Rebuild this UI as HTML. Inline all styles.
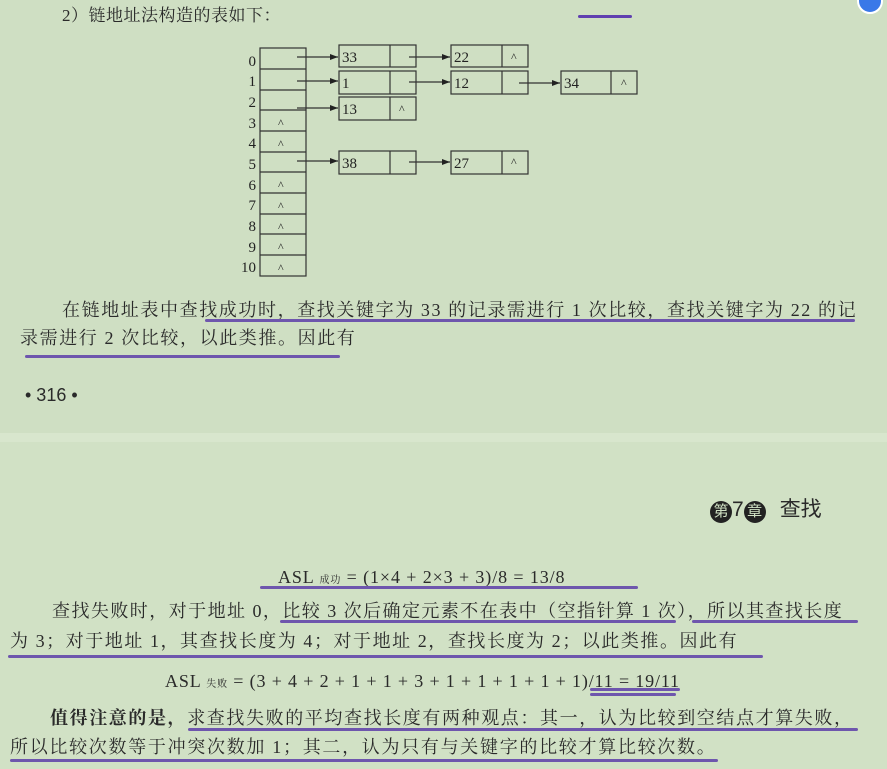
<!DOCTYPE html>
<html><head><meta charset="utf-8"><style>
body{margin:0;width:887px;height:769px;position:relative;overflow:hidden;background:#cfdfc3;font-family:"Liberation Serif","Noto Serif CJK SC",serif;color:#2a2a2a}
.t{position:absolute;white-space:nowrap;font-size:18px;line-height:20px}
.u{position:absolute;height:3px;background:#6e56ad;border-radius:2px}
</style></head><body>
<div style="position:absolute;left:0;top:433px;width:887px;height:9px;background:#d8e6cd"></div>
<div style="position:absolute;left:0;top:442px;width:887px;height:327px;background:#d1e1c5"></div>
<div style="position:absolute;left:857px;top:-12px;width:22px;height:22px;border-radius:50%;background:#3a78e8;border:2px solid #fff"></div>
<div class="t" style="left:62px;top:6px;font-size:17px;letter-spacing:0.5px">2）链地址法构造的表如下：</div>
<div class="u" style="left:578px;top:15px;width:54px;background:#6040b0"></div>
<svg style="position:absolute;left:0;top:0" width="887" height="290" font-family="Liberation Serif" font-size="15" fill="#222">
<defs><marker id="a" markerWidth="8" markerHeight="6" refX="8" refY="3" orient="auto" markerUnits="userSpaceOnUse"><path d="M0,0L8,3L0,6z" fill="#222"/></marker></defs>
<g stroke="#333" stroke-width="1.2" fill="none">
<rect x="260" y="48" width="46" height="228"/>
<path d="M260 69H306M260 90H306M260 110H306M260 131H306M260 152H306M260 172H306M260 193H306M260 214H306M260 234H306M260 255H306"/>
<rect x="339" y="45" width="77" height="22"/><path d="M390 45V67"/>
<rect x="451" y="45" width="77" height="22"/><path d="M502 45V67"/>
<rect x="339" y="71" width="77" height="23"/><path d="M390 71V94"/>
<rect x="451" y="71" width="77" height="23"/><path d="M502 71V94"/>
<rect x="561" y="71" width="76" height="23"/><path d="M611 71V94"/>
<rect x="339" y="97" width="77" height="23"/><path d="M390 97V120"/>
<rect x="339" y="151" width="77" height="23"/><path d="M390 151V174"/>
<rect x="451" y="151" width="77" height="23"/><path d="M502 151V174"/>
<g marker-end="url(#a)">
<path d="M297 57H338"/><path d="M409 57H450"/><path d="M297 81H338"/><path d="M409 82H450"/><path d="M519 83H560"/><path d="M297 108H338"/><path d="M297 161H338"/><path d="M409 162H450"/>
</g>
</g>
<g text-anchor="end"><text x="256" y="66">0</text><text x="256" y="86">1</text><text x="256" y="107">2</text><text x="256" y="128">3</text><text x="256" y="148">4</text><text x="256" y="169">5</text><text x="256" y="190">6</text><text x="256" y="210">7</text><text x="256" y="231">8</text><text x="256" y="252">9</text><text x="256" y="272">10</text></g>
<g font-size="12"><text x="278" y="127">^</text><text x="278" y="148">^</text><text x="278" y="189">^</text><text x="278" y="210">^</text><text x="278" y="231">^</text><text x="278" y="251">^</text><text x="278" y="272">^</text>
<text x="511" y="61">^</text><text x="621" y="87">^</text><text x="399" y="113">^</text><text x="511" y="166">^</text></g>
<text x="342" y="62">33</text><text x="454" y="62">22</text><text x="342" y="88">1</text><text x="454" y="88">12</text><text x="564" y="88">34</text><text x="342" y="114">13</text><text x="342" y="168">38</text><text x="454" y="168">27</text>
</svg>
<div class="t" style="left:62px;top:300px;letter-spacing:1.6px">在链地址表中查找成功时，查找关键字为 33 的记录需进行 1 次比较，查找关键字为 22 的记</div>
<div class="u" style="left:205px;top:319px;width:650px"></div>
<div class="t" style="left:20px;top:328px;letter-spacing:1.6px">录需进行 2 次比较，以此类推。因此有</div>
<div class="u" style="left:25px;top:355px;width:315px"></div>
<div class="t" style="left:25px;top:385px;font-family:'Liberation Sans',sans-serif;font-size:18px">• 316 •</div>
<div class="t" style="left:710px;top:500px;font-family:'Liberation Sans','Noto Sans CJK SC',sans-serif;font-size:21px"><span style="display:inline-block;width:22px;height:22px;border-radius:50%;background:#222;color:#cfe0c3;font-size:15px;text-align:center;line-height:22px">第</span>7<span style="display:inline-block;width:22px;height:22px;border-radius:50%;background:#222;color:#cfe0c3;font-size:15px;text-align:center;line-height:22px">章</span><span style="display:inline-block;width:14px"></span>查找</div>
<div class="t" style="left:278px;top:567px;letter-spacing:0.9px">ASL <span style="font-size:10px">成功</span> = (1×4 + 2×3 + 3)/8 = 13/8</div>
<div class="u" style="left:260px;top:586px;width:378px"></div>
<div class="t" style="left:52px;top:601px;letter-spacing:1.45px">查找失败时，对于地址 0，比较 3 次后确定元素不在表中（空指针算 1 次），所以其查找长度</div>
<div class="u" style="left:280px;top:620px;width:396px"></div>
<div class="u" style="left:692px;top:620px;width:166px"></div>
<div class="t" style="left:10px;top:631px;letter-spacing:1.55px">为 3；对于地址 1，其查找长度为 4；对于地址 2，查找长度为 2；以此类推。因此有</div>
<div class="u" style="left:8px;top:655px;width:755px"></div>
<div class="t" style="left:165px;top:671px;letter-spacing:0.85px">ASL <span style="font-size:10px">失败</span> = (3 + 4 + 2 + 1 + 1 + 3 + 1 + 1 + 1 + 1 + 1)/11 = 19/11</div>
<div class="u" style="left:590px;top:688px;width:90px"></div>
<div class="u" style="left:590px;top:693px;width:86px"></div>
<div class="t" style="left:50px;top:708px;letter-spacing:1.6px"><b>值得注意的是，</b>求查找失败的平均查找长度有两种观点：其一，认为比较到空结点才算失败，</div>
<div class="u" style="left:188px;top:728px;width:670px"></div>
<div class="t" style="left:10px;top:737px;letter-spacing:1.7px">所以比较次数等于冲突次数加 1；其二，认为只有与关键字的比较才算比较次数。</div>
<div class="u" style="left:10px;top:759px;width:708px"></div>
</body></html>
